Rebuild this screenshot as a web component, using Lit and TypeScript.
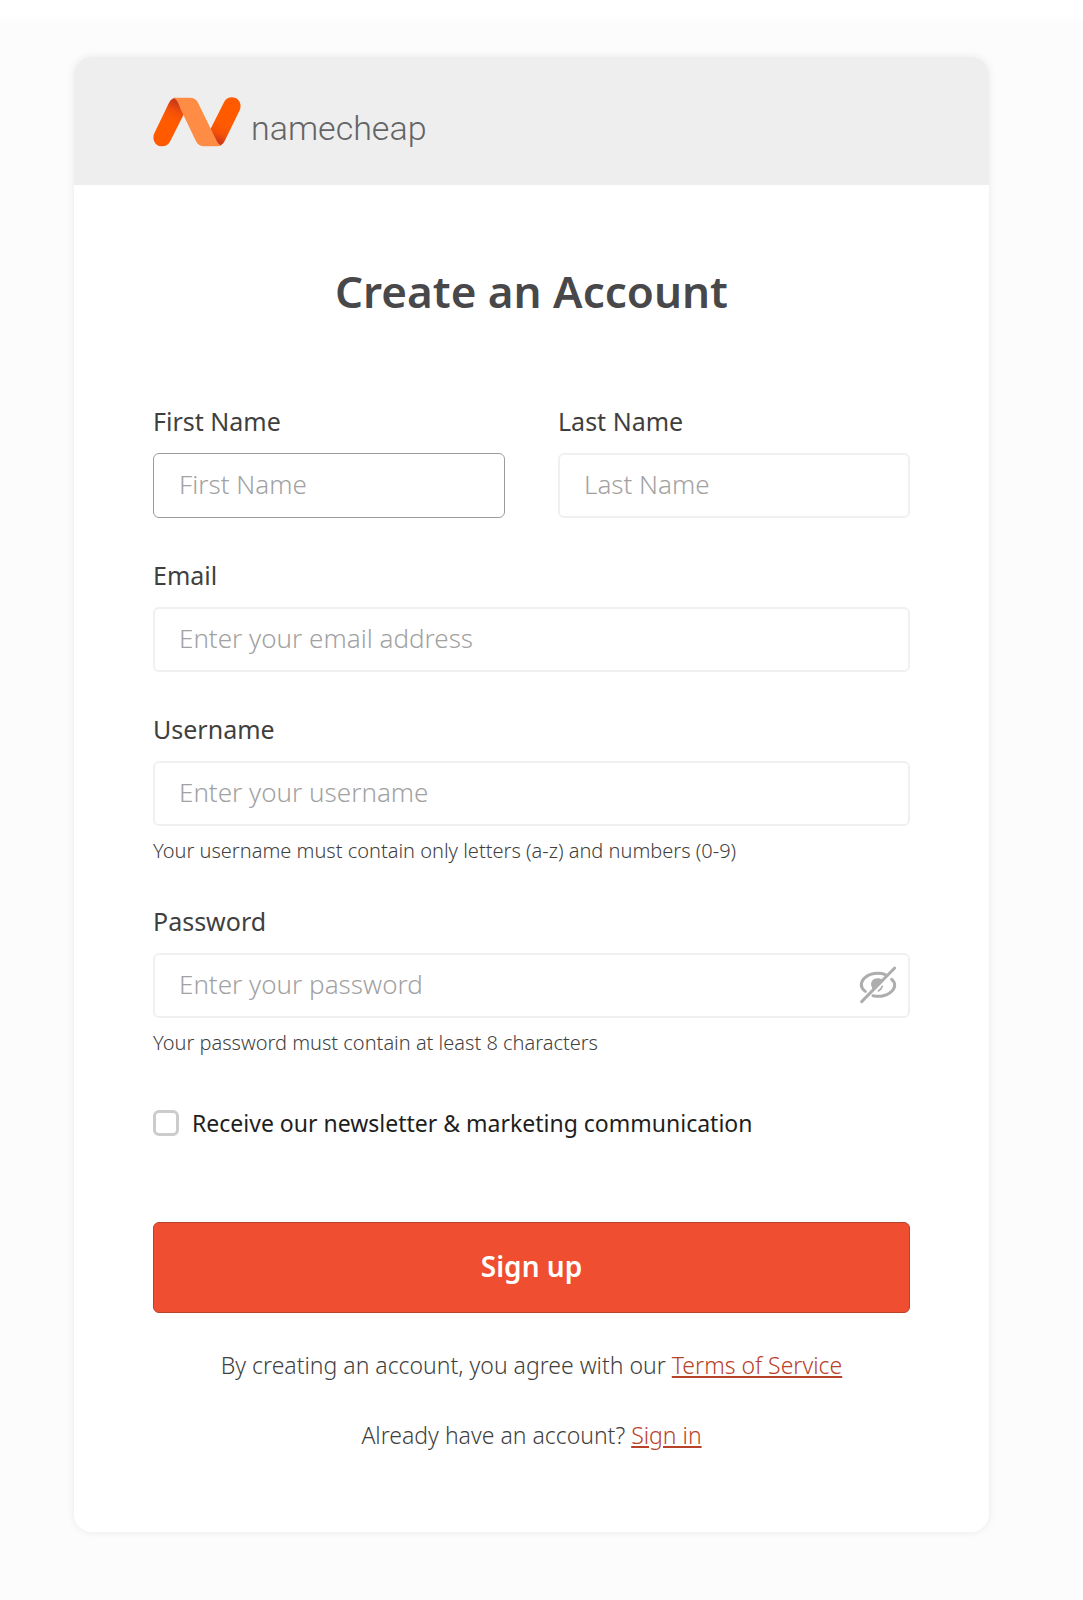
import { LitElement, html, css } from "lit";
import { customElement, property, state } from "lit/decorators.js";

@customElement("brand-logo")
export class BrandLogo extends LitElement {
  static styles = css`
    :host {
      display: block;
    }
    .logo {
      display: flex;
      align-items: flex-start;
      gap: 10px;
      color: #636466;
      text-decoration: none;
    }
    .mark {
      display: block;
      width: 88px;
      height: 50px;
    }
    .word {
      font: 300 34px/62px Roboto, sans-serif;
    }
  `;

  render() {
    return html`
      <a class="logo" href="#home">
        <svg class="mark" viewBox="38 35 264 150" aria-hidden="true">
          <defs>
            <linearGradient id="left" gradientUnits="userSpaceOnUse" x1="112" y1="50" x2="86" y2="102">
              <stop offset="0" stop-color="#c8371a" />
              <stop offset="0.5" stop-color="#f25008" />
              <stop offset="1" stop-color="#ff5a00" />
            </linearGradient>
            <linearGradient id="right" gradientUnits="userSpaceOnUse" x1="230" y1="174" x2="254" y2="122">
              <stop offset="0" stop-color="#c8321c" />
              <stop offset="0.5" stop-color="#f25008" />
              <stop offset="1" stop-color="#ff5a00" />
            </linearGradient>
          </defs>
          <path fill="url(#left)" d="M106 37C96 38 92 42 86 52L42 144C34 161 44 183 65 183C77 183 85 177 90 167L132 84Z" />
          <path fill="url(#right)" d="M236 182C244 180 248 176 253 167L298 75C306 57 296 36 275 36C264 36 256 41 251 51L209 134Z" />
          <path fill="#ff8c44" d="M103 37L148 37C161 37 168 42 173 52L226 160C231 171 235 178 243 180C239 182 234 183 229 183L192 183C180 183 172 178 167 168L121 72C116 58 112 42 99 38Z" />
        </svg>
        <span class="word">namecheap</span>
      </a>
    `;
  }
}

@customElement("form-field")
export class FormField extends LitElement {
  @property() label = "";
  @property() name = "";
  @property() type = "text";
  @property() placeholder = "";
  @property() hint = "";
  @property({ type: Boolean }) active = false;
  @state() private revealed = false;

  static styles = css`
    :host {
      display: block;
      min-width: 0;
    }
    .label {
      display: block;
      margin-bottom: 16px;
      color: #3f3f40;
      font-size: 25px;
      line-height: 32px;
    }
    .box {
      display: flex;
      align-items: center;
      box-sizing: border-box;
      height: 65px;
      border: 2px solid #f0f0f0;
      border-radius: 6px;
      background: #fff;
    }
    .box.active {
      border: 1px solid #9b9b9b;
      padding: 1px;
    }
    .input {
      flex: 1;
      min-width: 0;
      padding: 0 24px 4px;
      border: 0;
      outline: 0;
      background: none;
      color: #3f3f40;
      font: inherit;
      font-size: 26px;
      line-height: 32px;
    }
    .input::placeholder {
      color: #a2a2a2;
      font-weight: 300;
      opacity: 1;
    }
    .toggle {
      display: flex;
      margin-right: 10px;
      padding: 0 0 2px;
      border: 0;
      background: none;
    }
    .eye {
      width: 40px;
      height: 40px;
    }
    .hint {
      margin: 12px 0 0;
      color: #3f3f40;
      font-size: 20px;
      font-weight: 300;
      line-height: 26px;
    }
  `;

  private toggle() {
    this.revealed = !this.revealed;
  }

  render() {
    const isPassword = this.type === "password";
    return html`
      <label class="label" for="control">${this.label}</label>
      <div class="box ${this.active ? "active" : ""}">
        <input
          class="input"
          id="control"
          name=${this.name}
          type=${isPassword && this.revealed ? "text" : this.type}
          placeholder=${this.placeholder}
        />
        ${isPassword
          ? html`
              <button class="toggle" type="button" aria-label="Show password" @click=${this.toggle}>
                <svg class="eye" viewBox="54 74 120 120" fill="none" stroke="#adadad" stroke-width="9" stroke-linecap="round">
                  <path d="M76 153C68 147 64 140 64 134C64 115 86 99 113 99C121 99 129 100 136 103" />
                  <path d="M155 117C161 122 164 128 164 134C164 152 141 168 114 168C109 168 104 167 99 166" />
                  <path fill="#adadad" stroke="none" d="M96 142C88 126 99 114 112 114C119 114 124 116 127 119L100 148Z" />
                  <path stroke-width="5" d="M127 138C125 144 121 149 115 152" />
                  <path d="M65 184L164 83" />
                </svg>
              </button>
            `
          : null}
      </div>
      ${this.hint ? html`<p class="hint">${this.hint}</p>` : null}
    `;
  }
}

@customElement("app-root")
export class AppRoot extends LitElement {
  static styles = css`
    :host {
      display: block;
      box-sizing: border-box;
      min-height: 100vh;
      padding: 57px 94px 67px 74px;
      background: linear-gradient(#fff 16px, #fcfcfc 24px);
      font-family: "Noto Sans", "Open Sans", sans-serif;
    }
    .card {
      overflow: hidden;
      border-radius: 18px;
      background: #fff;
      box-shadow: 0 0 8px rgba(0, 0, 0, 0.08);
    }
    .header {
      padding: 40px 79px 26px;
      background: #eee;
    }
    .form {
      display: flex;
      flex-direction: column;
      padding: 74px 79px 82px;
    }
    .title {
      margin: 0 0 82px;
      color: #48484a;
      font-size: 44px;
      font-weight: 600;
      line-height: 64px;
      text-align: center;
    }
    .fields {
      display: flex;
      flex-direction: column;
      gap: 41px;
    }
    .names {
      display: grid;
      grid-template-columns: 1fr 1fr;
      gap: 53px;
    }
    .newsletter {
      display: flex;
      align-items: center;
      gap: 13px;
      margin-top: 51px;
      color: #1e1e20;
      font-size: 23px;
      line-height: 32px;
    }
    .check {
      appearance: none;
      flex: none;
      width: 26px;
      height: 26px;
      margin: 0;
      border: 3px solid #ccc;
      border-radius: 6px;
      background: #fff;
    }
    .check:checked {
      background: #f04e30;
    }
    .submit {
      height: 91px;
      margin-top: 83px;
      padding: 0 0 3px;
      border: 1px solid #b8432c;
      border-radius: 6px;
      background: #f04e30;
      color: #fff;
      font: inherit;
      font-size: 28px;
      font-weight: 600;
    }
    .notes {
      display: flex;
      flex-direction: column;
      gap: 40px;
      margin-top: 37px;
      color: #3f3f40;
      font-size: 23px;
      font-weight: 300;
      line-height: 30px;
      text-align: center;
    }
    .note {
      margin: 0;
    }
    .link {
      color: #b8412a;
      text-underline-offset: 2px;
    }
  `;

  render() {
    return html`
      <main class="card">
        <header class="header"><brand-logo></brand-logo></header>
        <form class="form" @submit=${(event: Event) => event.preventDefault()}>
          <h1 class="title">Create an Account</h1>
          <div class="fields">
            <div class="names">
              <form-field label="First Name" name="first" placeholder="First Name" active></form-field>
              <form-field label="Last Name" name="last" placeholder="Last Name"></form-field>
            </div>
            <form-field label="Email" name="email" type="email" placeholder="Enter your email address"></form-field>
            <form-field
              label="Username"
              name="username"
              placeholder="Enter your username"
              hint="Your username must contain only letters (a-z) and numbers (0-9)"
            ></form-field>
            <form-field
              label="Password"
              name="password"
              type="password"
              placeholder="Enter your password"
              hint="Your password must contain at least 8 characters"
            ></form-field>
          </div>
          <label class="newsletter">
            <input class="check" type="checkbox" name="newsletter" />
            <span>Receive our newsletter &amp; marketing communication</span>
          </label>
          <button class="submit" type="submit">Sign up</button>
          <div class="notes">
            <p class="note">
              By creating an account, you agree with our <a class="link" href="#terms">Terms of Service</a>
            </p>
            <p class="note">Already have an account? <a class="link" href="#signin">Sign in</a></p>
          </div>
        </form>
      </main>
    `;
  }
}
